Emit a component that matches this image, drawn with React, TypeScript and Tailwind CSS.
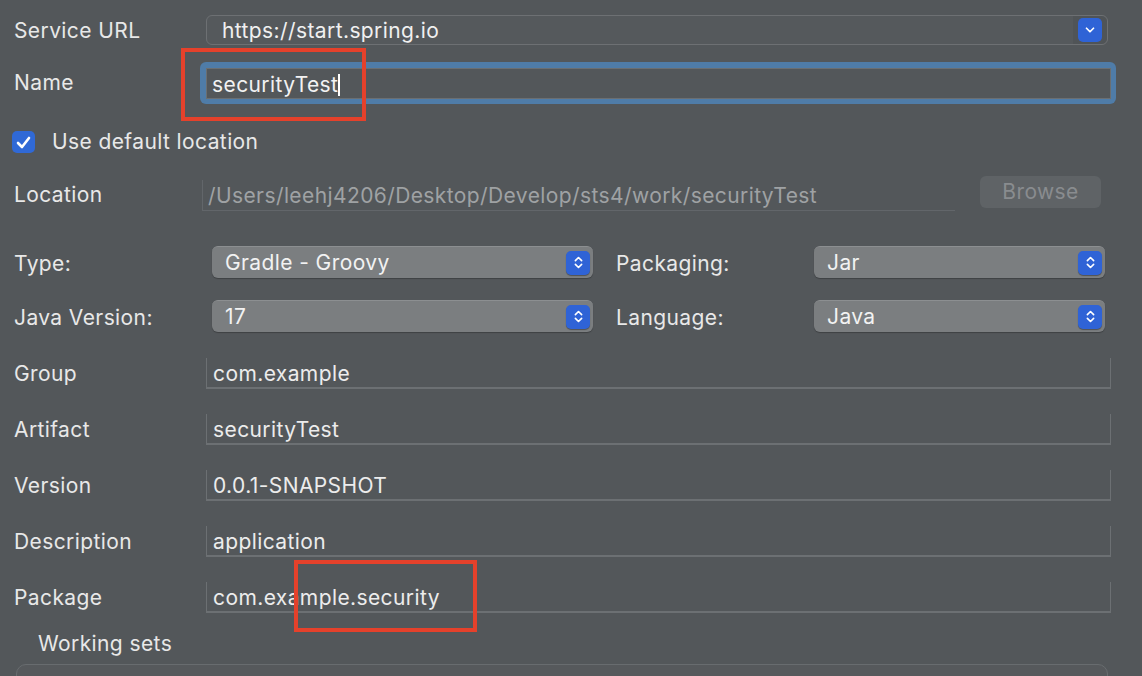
import { ChevronDown, ChevronsUpDown } from "lucide-react"

const font = "font-['Inter','Liberation_Sans',sans-serif] text-[21px] tracking-[0.4px]"

function Stepper() {
  return (
    <div className="flex h-[24px] w-[24px] items-center justify-center rounded-[5px] bg-[#2f63d6] shadow-[0_1px_1px_rgba(0,0,0,0.35)]">
      <ChevronsUpDown className="h-[15px] w-[15px] text-white" strokeWidth={2.6} />
    </div>
  )
}

function Select({ value, width }: { value: string; width: string }) {
  return (
    <div className={`flex h-[32px] ${width} items-center justify-between rounded-[6px] border-t border-[#8c8f91] bg-[#7b7e80] pl-[13px] pr-[3px] shadow-[0_1px_1px_rgba(0,0,0,0.25)]`}>
      <span className="text-[#f2f2f2]">{value}</span>
      <Stepper />
    </div>
  )
}

function TextRow({ label, value, first }: { label: string; value: string; first?: boolean }) {
  return (
    <div className={`flex h-[31px] items-center ${first ? "mt-[26px]" : "mt-[25px]"}`}>
      <div className="w-[206px] pl-[14px] text-[#e8e8e8]">{label}</div>
      <div className="flex h-[31px] w-[905px] items-center border-b-2 border-l border-r border-[#6c7073] pl-[6px] pt-[3px] text-[#ececec]">
        {value}
      </div>
    </div>
  )
}

export default function App() {
  return (
    <div className={`relative h-[676px] w-[1142px] overflow-hidden bg-[#53575a] ${font}`}>
      {/* Service URL */}
      <div className="mt-[15px] flex h-[30px] items-center">
        <div className="w-[206px] pl-[14px] pt-[2px] text-[#e8e8e8]">Service URL</div>
        <div className="flex h-[30px] w-[902px] items-center rounded-[6px] border border-[#6d7073] bg-[#55595c]">
          <div className="flex-1 pl-[15px] pt-[2px] text-[#f0f0f0]">https://start.spring.io</div>
          <div className="flex h-full w-[34px] items-center justify-center rounded-r-[6px] bg-[#505457]">
            <div className="flex h-[24px] w-[24px] items-center justify-center rounded-[5px] bg-[#2f63d6]">
              <ChevronDown className="h-[14px] w-[14px] text-white" strokeWidth={3} />
            </div>
          </div>
        </div>
      </div>

      {/* Name */}
      <div className="mt-[17px] flex h-[42px] items-center">
        <div className="w-[200px] pl-[14px] text-[#e8e8e8]">Name</div>
        <div className="h-[42px] w-[916px] rounded-[6px] bg-[#4f7ca8] p-[6px] pr-[5px] pb-[5px]">
          <div className="flex h-full items-center border border-[#6b6f72] bg-[#53575a] pl-[5px] pt-[2px] text-[#f2f2f2]">
            securityTest
            <span className="h-[22px] w-[2px] bg-white" />
          </div>
        </div>
      </div>

      {/* Use default location */}
      <div className="mt-[27px] flex h-[22px] items-center">
        <div className="ml-[12px] flex h-[22px] w-[23px] items-center justify-center rounded-[5px] bg-[#3069d6]">
          <svg width="15" height="13" viewBox="0 0 15 13" fill="none">
            <path d="M2 7 L6 11 L13 2" stroke="white" strokeWidth="2.6" strokeLinecap="round" strokeLinejoin="round" />
          </svg>
        </div>
        <span className="ml-[17px] text-[#e8e8e8]">Use default location</span>
      </div>

      {/* Location */}
      <div className="mt-[23px] flex h-[35px] items-start">
        <div className="mt-[3px] w-[202px] pl-[14px] text-[#e8e8e8]">Location</div>
        <div className="mt-[4px] flex h-[31px] w-[753px] items-center border-b border-l border-[#62666a] pl-[5px] pt-[2px] text-[#9fa2a4]">
          /Users/leehj4206/Desktop/Develop/sts4/work/securityTest
        </div>
        <div className="ml-[25px] flex h-[32px] w-[121px] items-center justify-center rounded-[6px] bg-[#5f6366] text-[#898c8f]">
          Browse
        </div>
      </div>

      {/* Type / Packaging */}
      <div className="mt-[35px] flex h-[32px] items-center">
        <div className="w-[212px] pl-[14px] pt-[4px] text-[#e8e8e8]">Type:</div>
        <Select value="Gradle - Groovy" width="w-[381px]" />
        <div className="w-[221px] pl-[23px] pt-[4px] text-[#e8e8e8]">Packaging:</div>
        <Select value="Jar" width="w-[291px]" />
      </div>

      {/* Java Version / Language */}
      <div className="mt-[22px] flex h-[32px] items-center">
        <div className="w-[212px] pl-[14px] pt-[4px] text-[#e8e8e8]">Java Version:</div>
        <Select value="17" width="w-[381px]" />
        <div className="w-[221px] pl-[23px] pt-[4px] text-[#e8e8e8]">Language:</div>
        <Select value="Java" width="w-[291px]" />
      </div>

      <TextRow label="Group" value="com.example" first />
      <TextRow label="Artifact" value="securityTest" />
      <TextRow label="Version" value="0.0.1-SNAPSHOT" />
      <TextRow label="Description" value="application" />
      <TextRow label="Package" value="com.example.security" />

      {/* Working sets */}
      <div className="mt-[20px] flex h-[22px] items-center pl-[38px] text-[#e8e8e8]">Working sets</div>
      <div className="ml-[16px] mt-[9px] h-[40px] w-[1092px] rounded-t-[10px] border border-[#686c6f] bg-[#56595c]" />

      {/* annotation boxes */}
      <div className="absolute left-[181px] top-[48px] h-[73px] w-[185px] border-4 border-[#e5412b]" />
      <div className="absolute left-[294px] top-[560px] h-[72px] w-[183px] border-4 border-[#e5412b]" />
    </div>
  )
}
